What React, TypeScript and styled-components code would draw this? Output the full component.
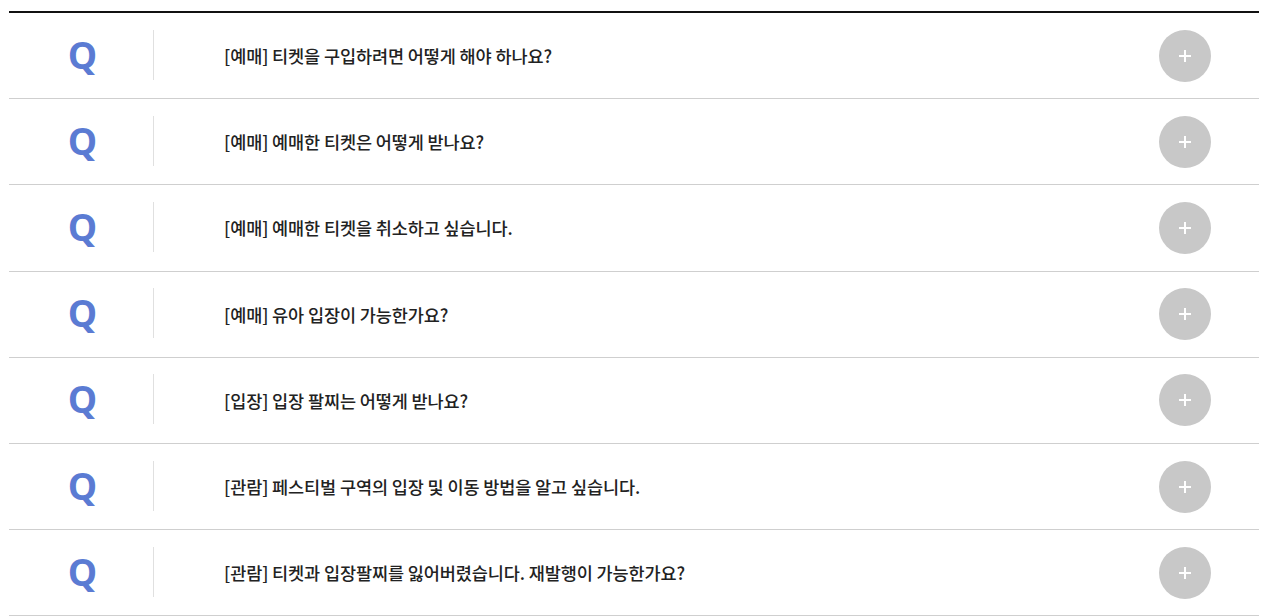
import React from "react";
import styled, { createGlobalStyle } from "styled-components";

const faqs = [
  "[예매] 티켓을 구입하려면 어떻게 해야 하나요?",
  "[예매] 예매한 티켓은 어떻게 받나요?",
  "[예매] 예매한 티켓을 취소하고 싶습니다.",
  "[예매] 유아 입장이 가능한가요?",
  "[입장] 입장 팔찌는 어떻게 받나요?",
  "[관람] 페스티벌 구역의 입장 및 이동 방법을 알고 싶습니다.",
  "[관람] 티켓과 입장팔찌를 잃어버렸습니다. 재발행이 가능한가요?",
];

const App = () => {
  return (
    <React.Fragment>
      <GlobalStyle />
      <Page>
        <List>
          {faqs.map((q) => (
            <Item key={q}>
              <Mark>Q</Mark>
              <Question>{q}</Question>
              <ToggleButton aria-label="열기">
                <PlusIcon />
              </ToggleButton>
            </Item>
          ))}
        </List>
      </Page>
    </React.Fragment>
  );
};

export default App;

const PlusIcon = () => (
  <svg width="14" height="14" viewBox="0 0 14 14">
    <path d="M7 1v12M1 7h12" stroke="#fff" strokeWidth="2" />
  </svg>
);

const GlobalStyle = createGlobalStyle`
  body {
    margin: 0;
    background: #fff;
    font-family: "Noto Sans CJK KR", "Noto Sans", sans-serif;
  }
`;

const Page = styled.div`
  padding: 11px 14px 0 9px;
`;

const List = styled.ul`
  list-style: none;
  margin: 0;
  padding: 0;
  width: 1250px;
  border-top: 2px solid #111;
`;

const Item = styled.li`
  display: flex;
  align-items: center;
  height: 85.2px;
  border-bottom: 1px solid #cfcfcf;
  padding-right: 48px;
`;

const Mark = styled.div`
  width: 145px;
  height: 50px;
  flex-shrink: 0;
  box-sizing: border-box;
  padding: 5px 0 0 3px;
  margin-top: -2px;
  text-align: center;
  font-family: "Open Sans", sans-serif;
  font-weight: 700;
  font-size: 37px;
  line-height: 40px;
  color: #5b7bd3;
  border-right: 1px solid #e0e0e0;
`;

const Question = styled.p`
  flex: 1;
  margin: 0 0 0 70px;
  font-size: 17.5px;
  font-weight: 500;
  color: #222;
  letter-spacing: -0.1px;
`;

const ToggleButton = styled.button`
  width: 52px;
  height: 52px;
  border: none;
  border-radius: 50%;
  background: #c8c8c8;
  display: flex;
  align-items: center;
  justify-content: center;
  padding: 0;
  cursor: pointer;
`;
